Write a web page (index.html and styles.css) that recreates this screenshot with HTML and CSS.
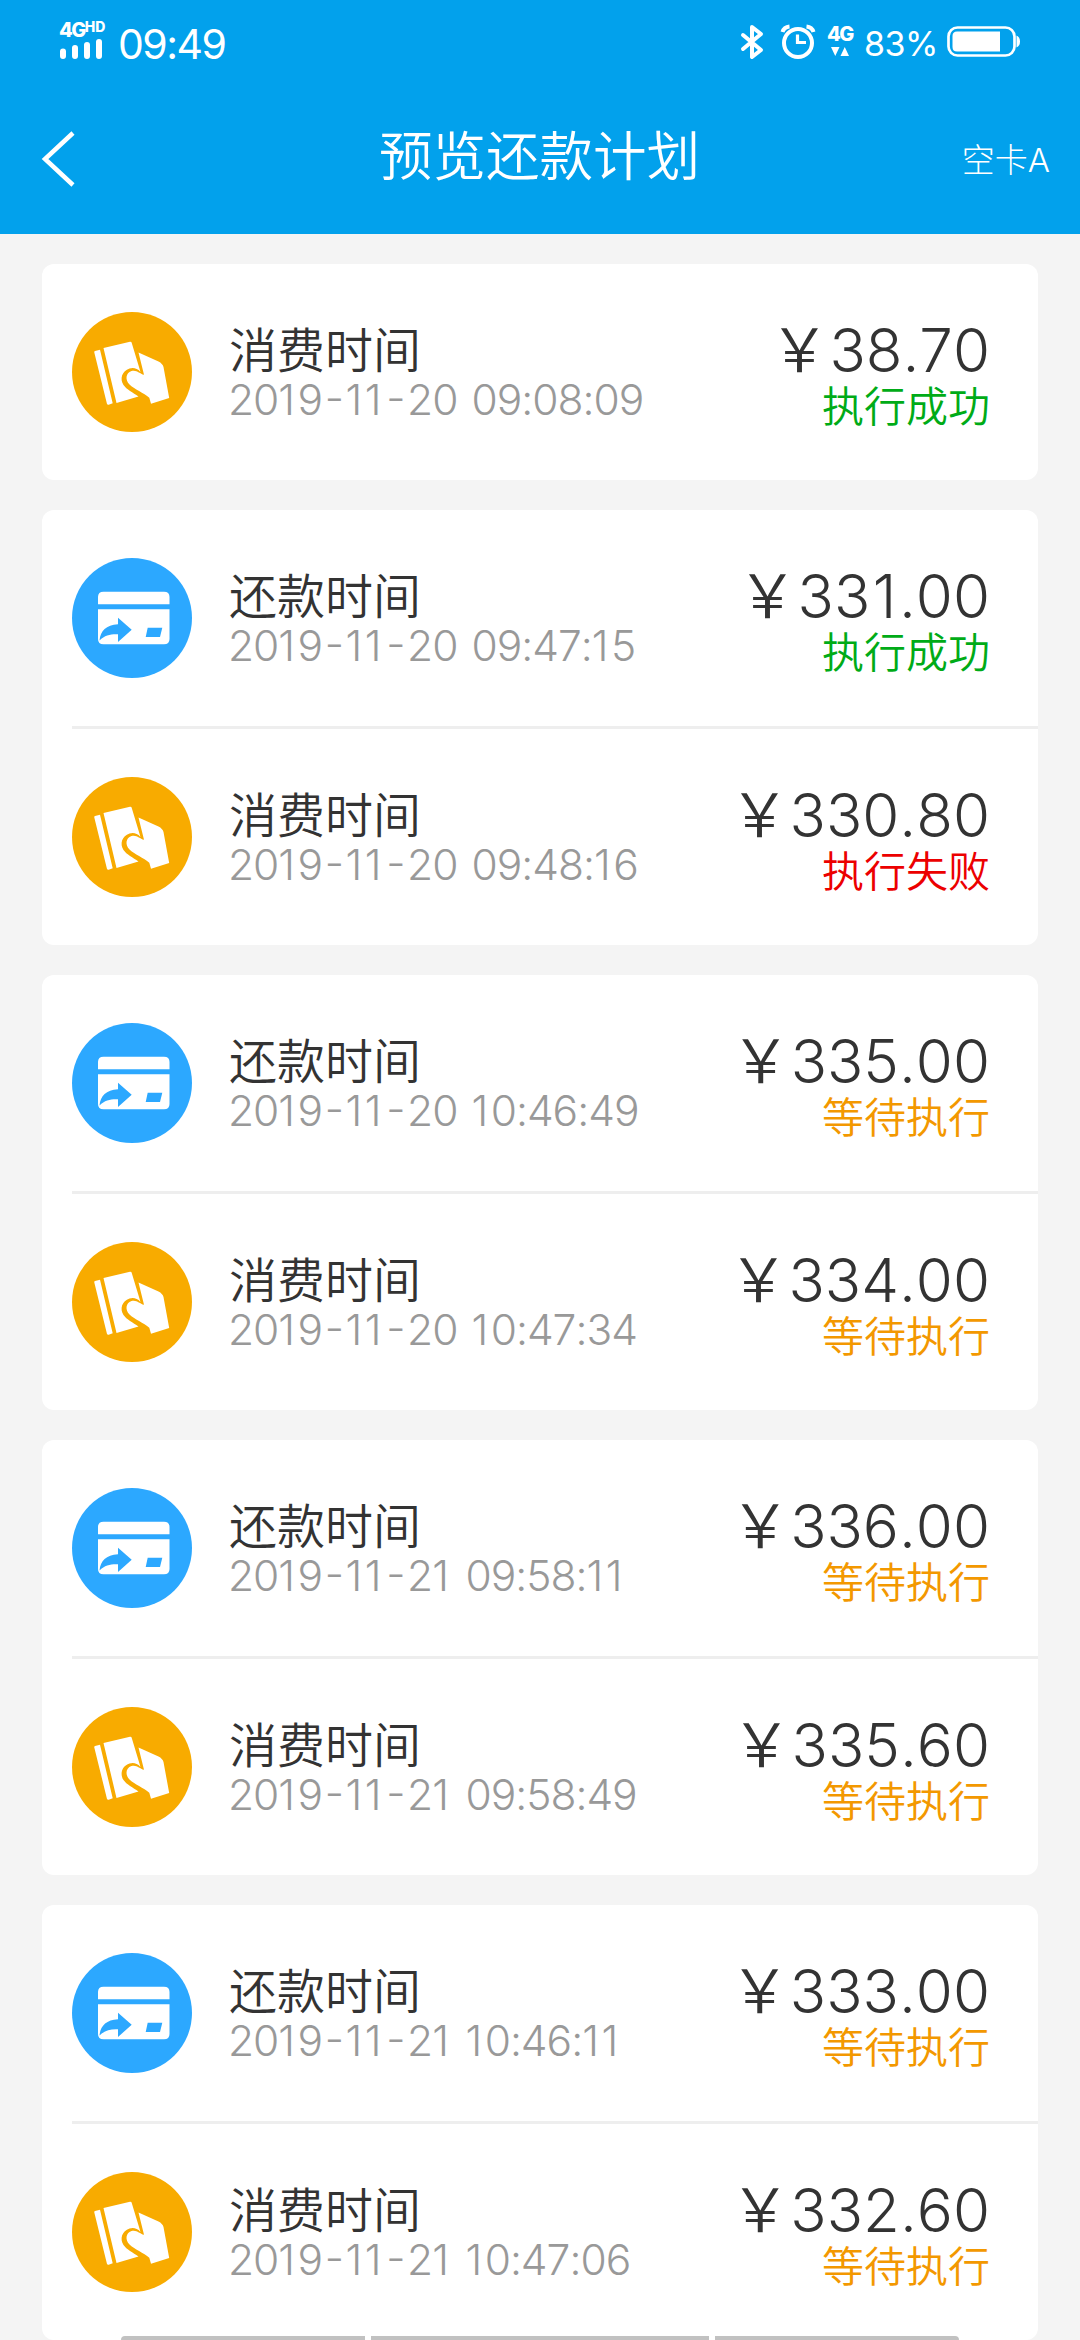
FILE: index.html
```html
<!DOCTYPE html>
<html lang="zh-CN">
<head>
<meta charset="utf-8">
<title>预览还款计划</title>
<link rel="stylesheet" href="styles.css">
</head>
<body>
<svg class="sprite" aria-hidden="true">
  <symbol id="spend" viewBox="0 0 120 120">
    <circle cx="60" cy="60" r="60" fill="#f8ab00"/>
    <g fill="#fff">
      <path d="M22.300 40.500Q22 39.500 23 39.100L28 37.700L40.700 91.300L36.700 92.700Q35.500 93 35 92Z"/>
      <path d="M31.500 36L58 29.700Q59.300 29.500 59.600 30.500L68.500 60C65 56 61 55.500 57.500 56.600C50 59 47.500 67 51.500 73C54.500 77.500 61 80.500 66.500 84.500L44.500 91Z"/>
      <path d="M66.500 40.500L86.500 49.500Q90.500 51.500 91.500 55L97.200 86L79 91.700L77.300 85.700C72 81 62 77 57.500 72.500C53 68 53.500 61 59.500 59C64.500 57.500 67.500 61.500 72 62.800Z"/>
    </g>
  </symbol>
  <symbol id="repay" viewBox="0 0 120 120">
    <circle cx="60" cy="60" r="60" fill="#2ca8ff"/>
    <path fill="#fff" d="M26 46.300V39Q26 33.700 31.500 33.700H92Q97.500 33.700 97.500 39V46.300ZM26 51.300H97.500V81Q97.500 86.300 92 86.300H31.500Q26 86.300 26 81Z"/>
    <path fill="#2ca8ff" d="M59.700 71.800L46 59.700V66.300C34 67 28.500 73 27.500 82.500C33 77 39 76 46 76.300V84ZM75.700 69.700H90.300L88 79H73.700Z"/>
  </symbol>
</svg>
<header class="header">
  <div class="status-bar">
    <div class="signal">
      <div class="network">4G<span class="hd">HD</span></div>
      <svg width="43" height="20" viewBox="0 0 43 20" stroke="#fff" stroke-width="6" stroke-linecap="round"><path d="M4 12.500V17M16 9V17M28 6V17M40 3V17"/></svg>
    </div>
    <span class="clock">09:49</span>
    <div class="indicators">
      <svg class="bluetooth" width="24" height="36" viewBox="0 0 24 36" fill="none" stroke="#fff" stroke-width="4" stroke-linecap="round" stroke-linejoin="round"><path d="M3 11L21 26L12 33V3L21 10L3 25"/></svg>
      <svg class="alarm" width="36" height="36" viewBox="0 0 36 36" fill="none" stroke="#fff"><circle cx="18" cy="19" r="14" stroke-width="4"/><path d="M17.500 10.500V18.500H26" stroke-width="3.200"/><path d="M2.500 8Q4 3 9.500 2.500M26.500 2.500Q32 3 33.500 8" stroke-width="4"/></svg>
      <div class="data">
        <span class="network">4G</span>
        <svg width="18" height="9" viewBox="0 0 18 9" fill="#fff"><path d="M0 0H8.500L4.250 9ZM9.500 9H18L13.750 0Z"/></svg>
      </div>
      <span class="percent">83%</span>
      <svg class="battery" width="73" height="31" viewBox="0 0 73 31"><rect x="1.500" y="1.500" width="66" height="28" rx="9" fill="none" stroke="#fff" stroke-width="2.700"/><path fill="#fff" d="M10 5.500H53V25.500H10Q5.500 25.500 5.500 21V10Q5.500 5.500 10 5.500ZM69.500 9.500Q73 11 73 15.500Q73 20 69.500 21.500Z"/></svg>
    </div>
  </div>
  <nav class="nav">
    <svg class="back" width="36" height="60" viewBox="0 0 36 60" fill="none" stroke="#fff" stroke-width="4.500"><path d="M34 4L6 30L34 56"/></svg>
    <h1 class="title">预览还款计划</h1>
    <span class="card-name">空卡A</span>
  </nav>
</header>
<main class="plans">
  <section class="card">
    <article class="row"><svg class="icon"><use href="#spend"/></svg><div class="info"><div class="label">消费时间</div><time class="time">20<u>1</u>9<i>-</i><u>11</u><i>-</i>20 09:08:09</time></div><div class="result"><div class="amount"><b>￥</b>38.70</div><div class="state success">执行成功</div></div></article>
  </section>
  <section class="card">
    <article class="row"><svg class="icon"><use href="#repay"/></svg><div class="info"><div class="label">还款时间</div><time class="time">20<u>1</u>9<i>-</i><u>11</u><i>-</i>20 09:47:<u>1</u>5</time></div><div class="result"><div class="amount"><b>￥</b>33<u>1</u>.00</div><div class="state success">执行成功</div></div></article>
    <hr class="divider">
    <article class="row"><svg class="icon"><use href="#spend"/></svg><div class="info"><div class="label">消费时间</div><time class="time">20<u>1</u>9<i>-</i><u>11</u><i>-</i>20 09:48:<u>1</u>6</time></div><div class="result"><div class="amount"><b>￥</b>330.80</div><div class="state failed">执行失败</div></div></article>
  </section>
  <section class="card">
    <article class="row"><svg class="icon"><use href="#repay"/></svg><div class="info"><div class="label">还款时间</div><time class="time">20<u>1</u>9<i>-</i><u>11</u><i>-</i>20 <u>1</u>0:46:49</time></div><div class="result"><div class="amount"><b>￥</b>335.00</div><div class="state waiting">等待执行</div></div></article>
    <hr class="divider">
    <article class="row"><svg class="icon"><use href="#spend"/></svg><div class="info"><div class="label">消费时间</div><time class="time">20<u>1</u>9<i>-</i><u>11</u><i>-</i>20 <u>1</u>0:47:34</time></div><div class="result"><div class="amount"><b>￥</b>334.00</div><div class="state waiting">等待执行</div></div></article>
  </section>
  <section class="card">
    <article class="row"><svg class="icon"><use href="#repay"/></svg><div class="info"><div class="label">还款时间</div><time class="time">20<u>1</u>9<i>-</i><u>11</u><i>-</i>2<u>1</u> 09:58:<u>11</u></time></div><div class="result"><div class="amount"><b>￥</b>336.00</div><div class="state waiting">等待执行</div></div></article>
    <hr class="divider">
    <article class="row"><svg class="icon"><use href="#spend"/></svg><div class="info"><div class="label">消费时间</div><time class="time">20<u>1</u>9<i>-</i><u>11</u><i>-</i>2<u>1</u> 09:58:49</time></div><div class="result"><div class="amount"><b>￥</b>335.60</div><div class="state waiting">等待执行</div></div></article>
  </section>
  <section class="card">
    <article class="row"><svg class="icon"><use href="#repay"/></svg><div class="info"><div class="label">还款时间</div><time class="time">20<u>1</u>9<i>-</i><u>11</u><i>-</i>2<u>1</u> <u>1</u>0:46:<u>11</u></time></div><div class="result"><div class="amount"><b>￥</b>333.00</div><div class="state waiting">等待执行</div></div></article>
    <hr class="divider">
    <article class="row"><svg class="icon"><use href="#spend"/></svg><div class="info"><div class="label">消费时间</div><time class="time">20<u>1</u>9<i>-</i><u>11</u><i>-</i>2<u>1</u> <u>1</u>0:47:06</time></div><div class="result"><div class="amount"><b>￥</b>332.60</div><div class="state waiting">等待执行</div></div></article>
  </section>
</main>
<div class="gesture-bar"><span></span><span></span><span></span></div>
</body>
</html>
```
FILE: styles.css
```css
* { box-sizing: border-box; }

body {
  position: relative;
  width: 1080px;
  height: 2340px;
  margin: 0;
  overflow: hidden;
  background: #f4f4f4;
  font-family: Inter, "Noto Sans CJK SC", sans-serif;
  font-weight: 300;
  font-kerning: none;
}

svg { display: block; flex: none; }
.sprite { position: absolute; width: 0; height: 0; }

.header {
  height: 234px;
  background: #02a1ec;
  color: #fff;
}

.status-bar {
  display: flex;
  align-items: flex-start;
  height: 81px;
  padding: 22px 60px 0 59px;
}

.signal { width: 47px; }
.network {
  display: flex;
  font-size: 20px;
  font-weight: 800;
  line-height: 16px;
  letter-spacing: -1.5px;
}
.signal .network { height: 17px; }
.hd { font-size: 14px; line-height: 9px; letter-spacing: 0; }

.clock {
  margin: -2px 0 0 12px;
  font-size: 41px;
  font-weight: 400;
  line-height: 48px;
  letter-spacing: -1.5px;
}

.indicators { display: flex; margin-left: auto; }
.bluetooth { margin-top: 2px; }
.alarm { margin: 2px 11px 0 16px; }
.data { width: 26px; padding-top: 4px; }
.data svg { margin: 5px 0 0 4px; }
.percent {
  width: 73px;
  margin-left: 11px;
  font-size: 34px;
  font-weight: 400;
  line-height: 43px;
  letter-spacing: -0.5px;
  white-space: nowrap;
}
.battery { margin: 4px 0 0 10px; }

.nav {
  display: grid;
  grid-template-columns: 200px 1fr 200px;
  height: 153px;
  padding: 0 30px 0 39px;
}
.back { margin-top: 48px; }
.title {
  margin: 40px 10px 0 0;
  font-size: 53.500px;
  font-weight: 350;
  line-height: 72px;
  text-align: center;
}
.card-name {
  margin-top: 55px;
  font-size: 33px;
  line-height: 48px;
  text-align: right;
}

.plans {
  display: flex;
  flex-direction: column;
  gap: 30px;
  padding: 30px 42px 0;
}
.card { border-radius: 12px; background: #fff; }
.row {
  display: flex;
  height: 216px;
  padding: 48px 48px 0 30px;
}
.icon { width: 120px; height: 120px; }
.info { margin-left: 37px; color: #999; }
.label {
  margin-top: 9px;
  color: #333;
  font-size: 48px;
  font-weight: 350;
  line-height: 60px;
}
.time {
  display: block;
  margin: -1px 0 0 -1px;
  font-size: 42.500px;
  line-height: 40px;
  letter-spacing: -1px;
  word-spacing: 3px;
  white-space: nowrap;
}
.time i {
  display: inline-block;
  margin: 0 2.500px;
  font-style: normal;
  font-feature-settings: "case";
}
/* Gives the narrow figure 1 a width closer to the other digits */
.time u {
  display: inline-block;
  letter-spacing: 2.500px;
  text-decoration: none;
}
.amount u { padding: 0 2.500px; text-decoration: none; }
.result { margin-left: auto; text-align: right; }
.amount {
  margin-top: 6px;
  color: #333;
  font-size: 60px;
  line-height: 64px;
  white-space: nowrap;
}
.amount b { font-weight: 350; }
.state {
  font-size: 42px;
  font-weight: 350;
  line-height: 50px;
}
.success { color: #00ab17; }
.failed { color: #ec0000; }
.waiting { color: #f39800; }

.divider {
  height: 3px;
  margin: 0 0 0 30px;
  border: 0;
  background: #eee;
}

.gesture-bar {
  position: absolute;
  bottom: 0;
  left: 121px;
  display: grid;
  grid-template-columns: 244px 338px 244px;
  gap: 6px;
  height: 4px;
}
.gesture-bar span { background: #c1c1c1; }
.gesture-bar span:first-child { border-top-left-radius: 4px; }
.gesture-bar span:last-child { border-top-right-radius: 4px; }
```
